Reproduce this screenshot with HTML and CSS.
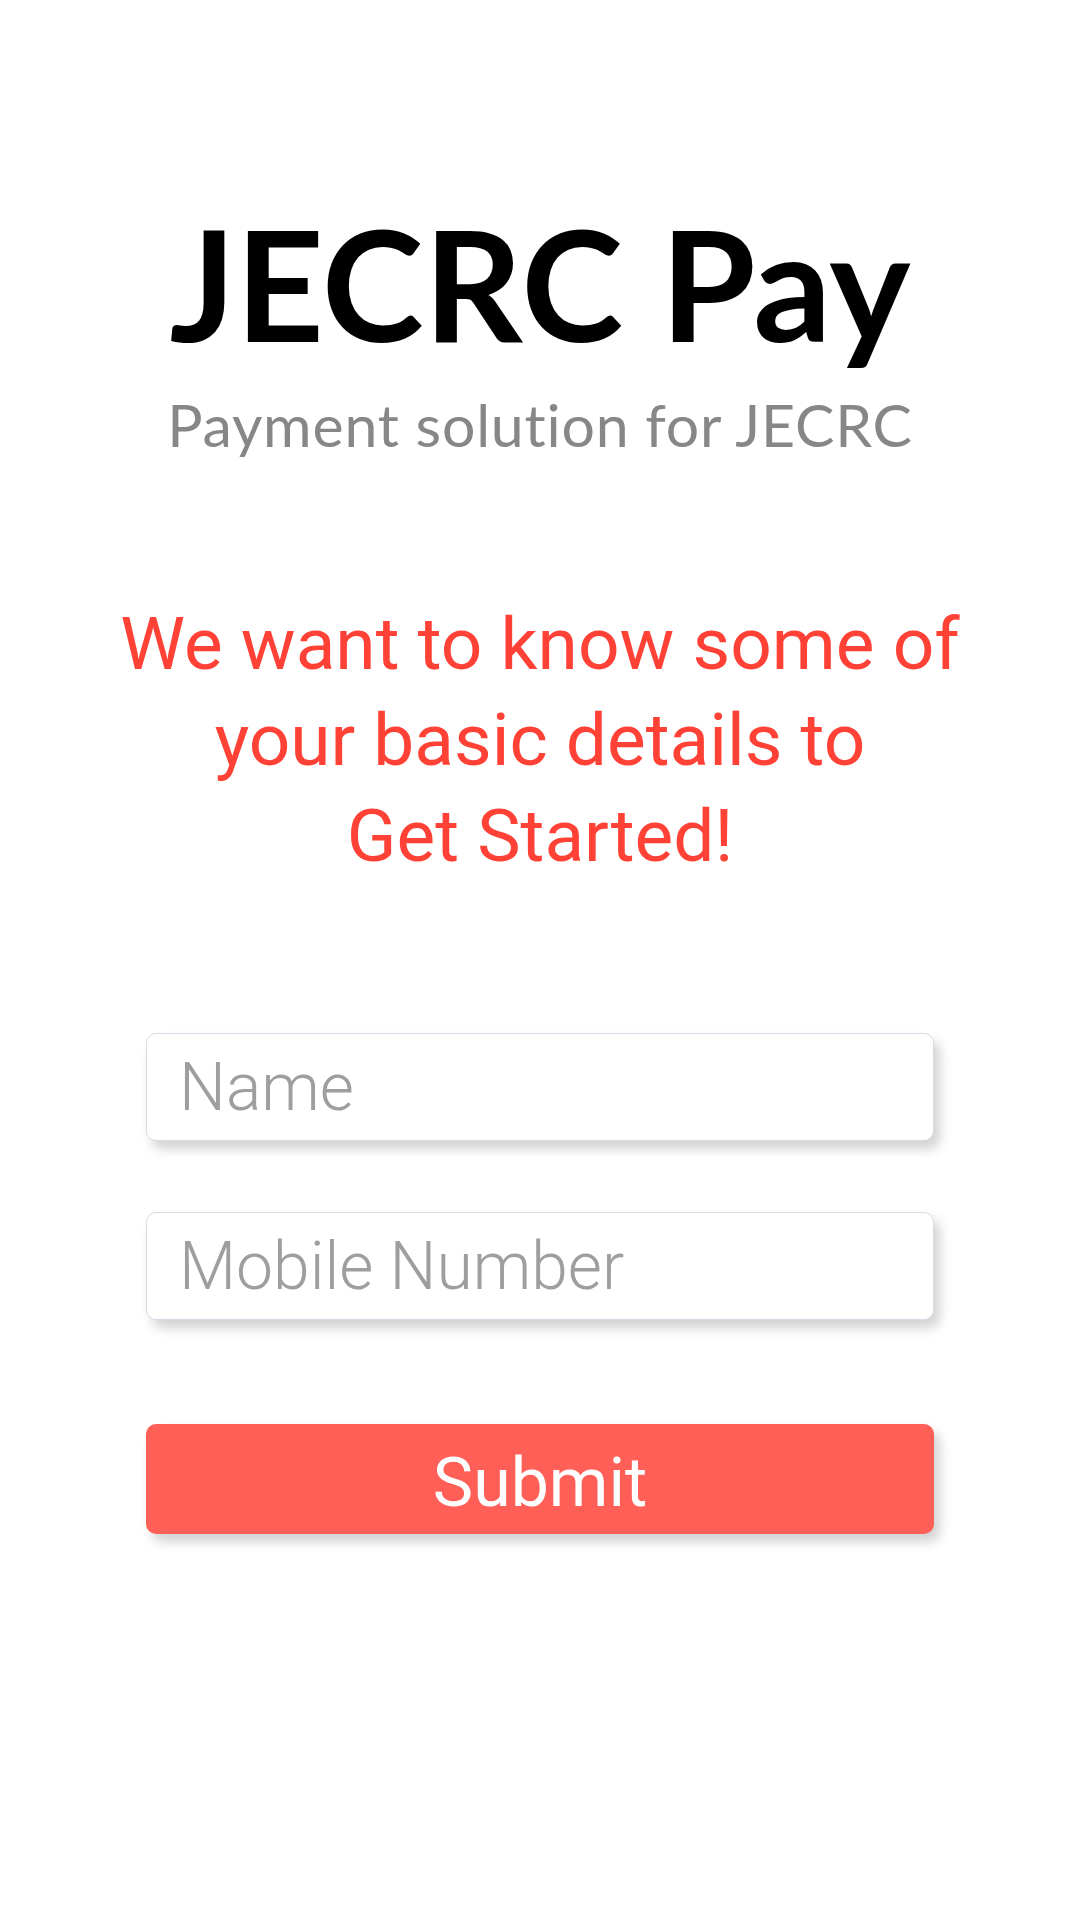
FILE: index.html
```html
<!DOCTYPE html>
<html lang="en">
<head>
<meta charset="utf-8">
<title>JECRC Pay</title>
<link rel="stylesheet" href="styles.css">
</head>
<body>
<main class="page">
  <header class="brand">
    <h1 class="brand-title">JECRC Pay</h1>
    <p class="brand-sub">Payment solution for JECRC</p>
  </header>
  <h2 class="prompt">We want to know some of<br>your basic details to<br>Get Started!</h2>
  <form class="form">
    <input class="field" type="text" placeholder="Name">
    <input class="field field-mobile" type="tel" placeholder="Mobile Number">
    <button class="submit" type="button">Submit</button>
  </form>
</main>
</body>
</html>
```
FILE: styles.css
```css
* { box-sizing: border-box; }
html, body { margin: 0; padding: 0; background: #ffffff; }
body { width: 1080px; height: 1920px; overflow: hidden; }

.page {
  display: flex;
  flex-direction: column;
  align-items: center;
  padding-top: 206px;
}

.brand {
  display: flex;
  flex-direction: column;
  align-items: center;
}

.brand-title {
  margin: 0;
  font-family: Lato, "Open Sans", sans-serif;
  font-weight: 700;
  font-size: 154px;
  line-height: 1;
  color: #000000;
  letter-spacing: 0;
}

.brand-sub {
  margin: 35px 0 0;
  font-family: Lato, "Open Sans", sans-serif;
  font-weight: 400;
  font-size: 59px;
  line-height: 1;
  color: #878787;
  letter-spacing: 0.8px;
}

.prompt {
  margin: 142px 0 0;
  font-family: Roboto, sans-serif;
  font-weight: 400;
  font-size: 73px;
  line-height: 96px;
  text-align: center;
  color: #ff4136;
}

.form {
  margin-top: 149px;
  width: 788px;
  display: flex;
  flex-direction: column;
}

.field {
  display: block;
  width: 100%;
  height: 108px;
  margin: 0;
  padding: 0 0 0 32px;
  border: 1.5px solid #d3dce7;
  border-radius: 10px;
  background: #ffffff;
  box-shadow: 6px 8px 12px rgba(0, 0, 0, 0.18);
  font-family: Roboto, sans-serif;
  font-weight: 300;
  font-size: 66px;
  color: #333;
  outline: none;
}
.field::placeholder { color: #9e9e9e; opacity: 1; }

.field-mobile { margin-top: 71px; }

.submit {
  margin-top: 104px;
  width: 100%;
  height: 110px;
  border: none;
  border-radius: 10px;
  background: #ff5f57;
  box-shadow: 6px 8px 12px rgba(0, 0, 0, 0.18);
  font-family: Roboto, sans-serif;
  font-weight: 400;
  font-size: 68px;
  color: #ffffff;
  padding: 8px 0 0;
}
```
